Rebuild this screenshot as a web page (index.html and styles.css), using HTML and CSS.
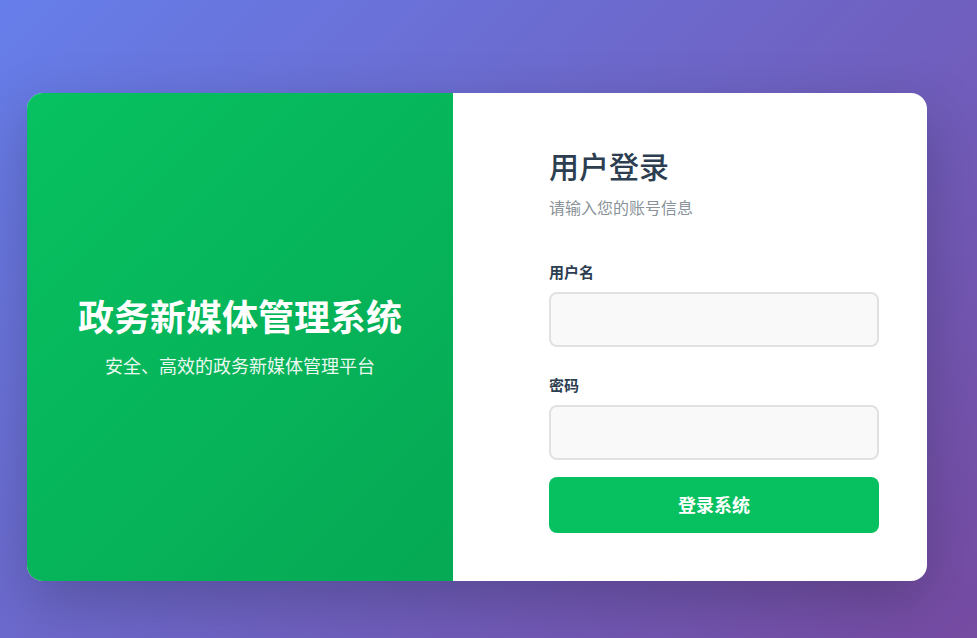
FILE: index.html
```html
<!DOCTYPE html>
<html lang="zh-CN">
<head>
<meta charset="utf-8">
<title>政务新媒体管理系统</title>
<link rel="stylesheet" href="styles.css">
</head>
<body>
<div class="page">
  <div class="card">
    <div class="brand">
      <h1 class="brand-title">政务新媒体管理系统</h1>
      <p class="brand-sub">安全、高效的政务新媒体管理平台</p>
    </div>
    <div class="login">
      <h2 class="login-title">用户登录</h2>
      <p class="login-sub">请输入您的账号信息</p>
      <form class="form">
        <label class="label" for="u">用户名</label>
        <input class="input" id="u" type="text">
        <label class="label label-2" for="p">密码</label>
        <input class="input" id="p" type="password">
        <button class="btn" type="button">登录系统</button>
      </form>
    </div>
  </div>
</div>
</body>
</html>
```

FILE: styles.css
```css
* { box-sizing: border-box; }
html, body { margin: 0; padding: 0; }
body {
  font-family: "Noto Sans CJK SC", "Noto Sans", sans-serif;
  background: linear-gradient(135deg, #667eea 0%, #764ba2 100%);
  width: 977px;
  height: 638px;
  overflow: hidden;
}
.page {
  padding: 93px 50px 0 27px;
}
.card {
  display: flex;
  width: 900px;
  height: 488px;
  border-radius: 16px;
  overflow: hidden;
  background: #fff;
  box-shadow: 0 20px 60px rgba(0, 0, 0, 0.22);
}
.brand {
  width: 426px;
  flex: none;
  background: linear-gradient(135deg, #07c160 0%, #06a954 100%);
  color: #fff;
  display: flex;
  flex-direction: column;
  align-items: center;
  justify-content: center;
  padding-bottom: 2px;
}
.brand-title {
  margin: 0 0 15px;
  font-size: 36px;
  line-height: 43px;
  font-weight: 700;
}
.brand-sub {
  margin: 0;
  font-size: 18px;
  line-height: 26px;
  opacity: 0.92;
}
.login {
  flex: 1;
  padding: 54px 48px 0 96px;
}
.login-title {
  margin: 0 0 13px;
  font-size: 30px;
  line-height: 36px;
  font-weight: 500;
  color: #2c3e50;
}
.login-sub {
  margin: 0 0 44px;
  font-size: 16px;
  line-height: 22px;
  color: #8a9399;
}
.form {
  display: flex;
  flex-direction: column;
}
.label {
  font-size: 15px;
  line-height: 20px;
  font-weight: 700;
  color: #2c3e50;
  margin-bottom: 10px;
}
.label-2 { margin-top: 28px; }
.input {
  height: 55px;
  width: 330px;
  border: 2px solid #e1e1e1;
  border-radius: 8px;
  background: #f9f9f9;
  font-size: 15px;
  padding: 0 14px;
  outline: none;
}
.btn {
  margin-top: 17px;
  height: 56px;
  width: 330px;
  border: none;
  border-radius: 8px;
  background: #07c160;
  color: #fff;
  font-family: inherit;
  font-size: 18px;
  font-weight: 700;
  line-height: 1;
  padding: 0 0 2px;
  cursor: pointer;
}
```
